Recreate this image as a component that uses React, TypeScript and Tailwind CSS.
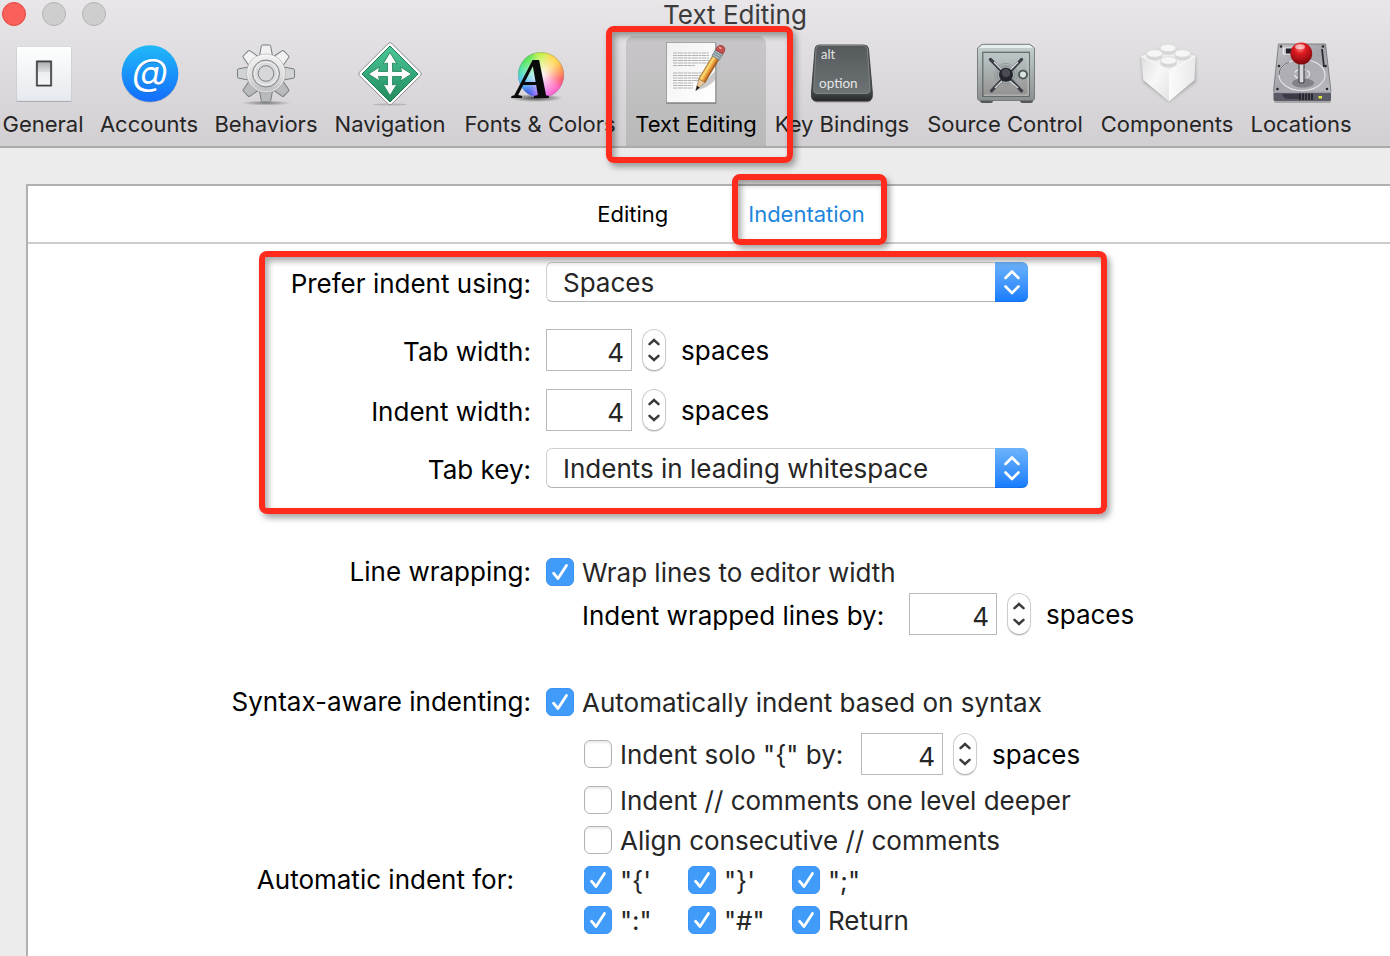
import { useState, type ReactNode } from "react";

/* ---------- toolbar icons ---------- */

function GeneralIcon() {
  return (
    <svg width="64" height="64" viewBox="0 0 64 64" aria-hidden="true">
      <defs>
        <linearGradient id="genPlate" x1="0" y1="0" x2="0" y2="1">
          <stop offset="0" stopColor="#fdfefe" />
          <stop offset="1" stopColor="#e6eaee" />
        </linearGradient>
        <linearGradient id="genSwitch" x1="0" y1="0" x2="0" y2="1">
          <stop offset="0" stopColor="#a9abad" />
          <stop offset="0.42" stopColor="#dcdedf" />
          <stop offset="0.46" stopColor="#eceef0" />
          <stop offset="1" stopColor="#f4f6f8" />
        </linearGradient>
      </defs>
      <rect x="5.5" y="5" width="55" height="55" rx="1" fill="#8e9093" opacity="0.75" />
      <rect x="5.5" y="4.5" width="55" height="54.5" rx="1" fill="url(#genPlate)" stroke="#c9ccd0" strokeWidth="0.6" />
      <rect x="24.5" y="18" width="17" height="27" rx="1.5" fill="#c3c6c9" />
      <rect x="26" y="19.5" width="14" height="24" fill="url(#genSwitch)" stroke="#3d3e40" strokeWidth="1.6" />
    </svg>
  );
}

function AccountsIcon() {
  return (
    <svg width="64" height="64" viewBox="0 0 64 64" aria-hidden="true">
      <defs>
        <linearGradient id="accBlue" x1="0" y1="0" x2="0" y2="1">
          <stop offset="0" stopColor="#20b9f8" />
          <stop offset="1" stopColor="#136dfd" />
        </linearGradient>
      </defs>
      <circle cx="33" cy="32.3" r="28.3" fill="#6f7f9a" opacity="0.5" />
      <circle cx="33" cy="31.5" r="28.3" fill="url(#accBlue)" />
      <g fontFamily="Inter, sans-serif" fontSize="37" fontStyle="italic" textAnchor="middle">
        <text x="33" y="43.5" fill="#1d5fae" opacity="0.6">
          @
        </text>
        <text x="33" y="42.5" fill="#fff">
          @
        </text>
      </g>
    </svg>
  );
}

const gearTeeth = [0, 45, 90, 135, 180, 225, 270, 315];

function BehaviorsIcon() {
  return (
    <svg width="64" height="64" viewBox="0 0 64 64" aria-hidden="true">
      <defs>
        <linearGradient id="gearBody" gradientUnits="userSpaceOnUse" x1="0" y1="2" x2="0" y2="60">
          <stop offset="0" stopColor="#fbfbfb" />
          <stop offset="0.55" stopColor="#dededf" />
          <stop offset="1" stopColor="#a9aaac" />
        </linearGradient>
        <radialGradient id="gearShadow">
          <stop offset="0" stopColor="#555" stopOpacity="0.7" />
          <stop offset="1" stopColor="#555" stopOpacity="0" />
        </radialGradient>
      </defs>
      <ellipse cx="32" cy="61" rx="25" ry="2.5" fill="url(#gearShadow)" />
      <g stroke="#777b80" strokeWidth="1">
        {gearTeeth.map((a) => (
          <path
            key={a}
            d="M25.5 14L27.3 4.2Q27.5 3 28.6 3H35.4Q36.5 3 36.7 4.2L38.5 14Z"
            transform={`rotate(${a} 32 31.5)`}
            fill={a > 90 && a < 270 ? "#b9babc" : a === 90 || a === 270 ? "#d2d3d4" : "#f1f1f2"}
          />
        ))}
      </g>
      <circle cx="32" cy="31.5" r="19.5" fill="url(#gearBody)" stroke="#a4a6a9" strokeWidth="0.6" />
      <circle cx="32" cy="31.5" r="18.3" fill="none" stroke="#fff" strokeWidth="0.8" opacity="0.6" />
      <circle cx="32" cy="31.5" r="13.5" fill="#d9dadc" stroke="#7d8186" strokeWidth="1" />
      <circle cx="32" cy="31.5" r="11.5" fill="none" stroke="#f0f0f0" strokeWidth="1" />
      <circle cx="32" cy="31.5" r="7.8" fill="#d7d6d9" stroke="#7d8186" strokeWidth="1" />
    </svg>
  );
}

function NavigationIcon() {
  return (
    <svg width="64" height="64" viewBox="0 0 64 64" aria-hidden="true">
      <defs>
        <linearGradient id="navGreen" gradientUnits="userSpaceOnUse" x1="0" y1="4" x2="0" y2="60">
          <stop offset="0" stopColor="#4fc798" />
          <stop offset="0.5" stopColor="#35a97c" />
          <stop offset="1" stopColor="#238a5c" />
        </linearGradient>
      </defs>
      <ellipse cx="32" cy="62.5" rx="17" ry="1" fill="#888" opacity="0.4" />
      <path
        d="M30.2 1.5Q32 -0.3 33.8 1.5L62.5 30.2Q64 32 62.5 33.8L33.8 62Q32 63.8 30.2 62L1.5 33.8Q0 32 1.5 30.2Z"
        fill="#fff"
        stroke="#8d8f91"
        strokeWidth="1"
      />
      <path d="M32 4L60 32L32 60L4 32Z" fill="url(#navGreen)" stroke="#1d7d55" strokeWidth="1" />
      <path
        d="M32 10.5L39 22L34.5 21V29.5H43.5L42.5 25L53.5 32L42.5 39L43.5 34.5H34.5V43L39 42L32 53.5L25 42L29.5 43V34.5H20.5L21.5 39L10.5 32L21.5 25L20.5 29.5H29.5V21L25 22Z"
        fill="#fff"
        stroke="#1f7f58"
        strokeWidth="0.8"
      />
    </svg>
  );
}

function FontsIcon() {
  return (
    <svg width="64" height="64" viewBox="0 0 64 64" className="overflow-visible" aria-hidden="true">
      <defs>
        <radialGradient id="wheelWhite">
          <stop offset="0" stopColor="#fff" stopOpacity="0.95" />
          <stop offset="1" stopColor="#fff" stopOpacity="0" />
        </radialGradient>
        <radialGradient id="fontShadow">
          <stop offset="0" stopColor="#222" stopOpacity="0.8" />
          <stop offset="1" stopColor="#222" stopOpacity="0" />
        </radialGradient>
        <clipPath id="wheelClip">
          <circle cx="33" cy="33" r="23" />
        </clipPath>
        <filter id="wheelBlur">
          <feGaussianBlur stdDeviation="3" />
        </filter>
      </defs>
      <ellipse cx="28" cy="56" rx="27" ry="4" fill="url(#fontShadow)" />
      <g clipPath="url(#wheelClip)">
        <rect x="8" y="8" width="50" height="50" fill="#b8a0ff" />
        <g filter="url(#wheelBlur)">
          <path d="M33 33L20 0H46Z" fill="#c4f048" />
          <path d="M33 33L44 0H70V14Z" fill="#ffd84e" />
          <path d="M33 33L70 12V34Z" fill="#ff9a4a" />
          <path d="M33 33L70 32V56Z" fill="#ff5560" />
          <path d="M33 33L68 52L44 70Z" fill="#ff62c8" />
          <path d="M33 33L46 70H22Z" fill="#d670ff" />
          <path d="M33 33L24 70L0 54Z" fill="#3f62ee" />
          <path d="M33 33L0 56V30Z" fill="#4dc4f5" />
          <path d="M33 33L0 34V10Z" fill="#48e3a0" />
          <path d="M33 33L-4 14L22 0Z" fill="#55e554" />
        </g>
        <circle cx="33" cy="33" r="22" fill="url(#wheelWhite)" />
      </g>
      <circle cx="33" cy="33" r="22.5" fill="none" stroke="#888" strokeOpacity="0.35" />
      <text x="6" y="56" fontFamily="'Liberation Serif', serif" fontStyle="italic" fontWeight="700" fontSize="56" fill="#0a0a0a">
        A
      </text>
    </svg>
  );
}

const docLines = [11, 13.5, 16, 18.5, 21, 23.5, 31, 33.5, 36, 38.5, 41, 43.5, 46];

function TextEditingIcon() {
  return (
    <svg width="64" height="64" viewBox="0 0 64 64" aria-hidden="true">
      <defs>
        <linearGradient id="paper" x1="0" y1="0" x2="1" y2="1">
          <stop offset="0" stopColor="#f1f1f1" />
          <stop offset="1" stopColor="#ffffff" />
        </linearGradient>
        <linearGradient id="pencil" x1="0" y1="0" x2="1" y2="0">
          <stop offset="0" stopColor="#c98a2a" />
          <stop offset="0.25" stopColor="#ffe27a" />
          <stop offset="0.5" stopColor="#f2b04a" />
          <stop offset="0.75" stopColor="#d9812c" />
          <stop offset="1" stopColor="#8a4a17" />
        </linearGradient>
      </defs>
      <rect x="2" y="1" width="50.5" height="61" fill="#77787a" opacity="0.7" />
      <rect x="2.5" y="0.5" width="49" height="60" fill="url(#paper)" stroke="#9a9a9b" strokeWidth="0.8" />
      {docLines.map((y, i) => (
        <path
          key={y}
          d={`M9 ${y}H${i === 5 ? 31 : i > 9 ? 29 : i > 6 ? 38 : 45}`}
          stroke="#b2b2b3"
          strokeWidth="1"
          strokeDasharray="4 0.5 6 0.5 3 0.5"
        />
      ))}
      <path d="M33 48L51 29V38Q44 46 33 48Z" fill="#555" opacity="0.3" />
      <g transform="translate(32 48.5) rotate(31)">
        <path d="M-0.3 0L-3.7 -12H3.7Z" fill="#e9c79a" stroke="#8f6a3c" strokeWidth="0.5" />
        <path d="M0 0.5L-1.6 -4.5H1.6Z" fill="#171717" />
        <rect x="-3.7" y="-39" width="7.4" height="27.5" fill="url(#pencil)" stroke="#8a5a1e" strokeWidth="0.5" />
        <rect x="-4.2" y="-45" width="8.4" height="7" fill="#aab8bd" stroke="#66767b" strokeWidth="0.7" />
        <path d="M-4 -42.8H4M-4 -40.5H4" stroke="#6d7f86" strokeWidth="0.8" />
        <path d="M-4.2 -45V-48Q-4 -52 0 -52Q4 -52 4.2 -48V-45Z" fill="#c4504f" stroke="#8c3030" strokeWidth="0.6" />
        <ellipse cx="-1.2" cy="-49" rx="1.8" ry="1" fill="#eb9a98" />
      </g>
    </svg>
  );
}

function KeyIcon() {
  return (
    <svg width="64" height="64" viewBox="0 0 64 64" aria-hidden="true">
      <defs>
        <linearGradient id="keyTop" x1="0" y1="0" x2="0" y2="1">
          <stop offset="0" stopColor="#55595b" />
          <stop offset="1" stopColor="#6d7375" />
        </linearGradient>
        <linearGradient id="keySide" x1="0" y1="0" x2="0" y2="1">
          <stop offset="0" stopColor="#5d6163" />
          <stop offset="0.85" stopColor="#46494b" />
          <stop offset="1" stopColor="#242628" />
        </linearGradient>
      </defs>
      <rect x="3" y="52" width="58" height="8.5" rx="4" fill="#777" opacity="0.6" />
      <path
        d="M9 3H54Q58 3 58.5 7L62.3 50V54Q62.3 59 57 59H7Q1.5 59 1.5 54V50L5 7Q5.5 3 9 3Z"
        fill="url(#keySide)"
        stroke="#2d2f31"
        strokeWidth="0.8"
      />
      <path
        d="M9.5 3.5H53.5Q57 3.5 57.3 7L60 47Q60.2 51.5 56 51.5H7.5Q3.5 51.5 3.8 47L6 7Q6.2 3.5 9.5 3.5Z"
        fill="url(#keyTop)"
        stroke="#878c8e"
        strokeWidth="0.8"
      />
      <text x="11" y="17" fontFamily="Lato, sans-serif" fontSize="13" fill="#e4e6e6">
        alt
      </text>
      <text x="9" y="46" fontFamily="Lato, sans-serif" fontSize="13.5" fill="#e4e6e6">
        option
      </text>
    </svg>
  );
}

function SafeIcon() {
  return (
    <svg width="64" height="64" viewBox="0 0 64 64" aria-hidden="true">
      <defs>
        <linearGradient id="safeBody" x1="0" y1="0" x2="0" y2="1">
          <stop offset="0" stopColor="#c6d1d1" />
          <stop offset="1" stopColor="#8c8f8f" />
        </linearGradient>
        <linearGradient id="safeDoor" x1="0" y1="0" x2="0" y2="1">
          <stop offset="0" stopColor="#bcc9c9" />
          <stop offset="1" stopColor="#93908f" />
        </linearGradient>
      </defs>
      <rect x="7" y="56" width="13" height="5" rx="2.5" fill="#55585a" />
      <rect x="47" y="56" width="13" height="5" rx="2.5" fill="#55585a" />
      <path
        d="M9 2.3H57L61.5 6V56Q61.5 58.5 59 58.5H7Q4.5 58.5 4.5 56V6Z"
        fill="url(#safeBody)"
        stroke="#6f7676"
        strokeWidth="0.9"
      />
      <path d="M9.5 3H56.5L60 6H6Z" fill="#e6eeee" />
      <rect x="9.8" y="10.3" width="46.5" height="44" fill="url(#safeDoor)" stroke="#5e6566" strokeWidth="1.2" />
      <path d="M11 53.2H55.2V11.5" fill="none" stroke="#d9e1e1" strokeWidth="0.7" />
      <circle cx="33" cy="32.7" r="11.3" fill="none" stroke="#8d9597" strokeWidth="0.8" />
      <circle cx="33" cy="32.7" r="9" fill="#a0aaab" stroke="#7e8688" strokeWidth="0.8" />
      <path d="M17.5 17.5L48.5 48.8M48.5 17.5L18.5 48.8" stroke="#3b3e45" strokeWidth="3.2" strokeLinecap="round" />
      <path d="M21 20L29 28M45 20L37 28M22 46L29 39M45 46L37 39" stroke="#dfe5e8" strokeWidth="1.3" />
      <circle cx="33" cy="32.7" r="7" fill="#25262d" />
      <circle cx="33" cy="31" r="4.2" fill="#4a4b54" />
      <circle cx="50" cy="32.6" r="4" fill="#d9e2e2" stroke="#4f5556" strokeWidth="1.9" />
    </svg>
  );
}

const studs = [
  [33, 8],
  [19.5, 13.5],
  [47.5, 13.5],
  [33.5, 20.5],
];

function BrickIcon() {
  return (
    <svg width="64" height="64" viewBox="0 0 64 64" aria-hidden="true">
      <defs>
        <linearGradient id="brickLeft" x1="0" y1="0" x2="1" y2="1">
          <stop offset="0" stopColor="#dededf" />
          <stop offset="0.5" stopColor="#f7f7f7" />
          <stop offset="1" stopColor="#e4e4e4" />
        </linearGradient>
        <linearGradient id="brickRight" x1="0" y1="0" x2="1" y2="0">
          <stop offset="0" stopColor="#fbfbfb" />
          <stop offset="1" stopColor="#e9e9ea" />
        </linearGradient>
        <filter id="brickShadow" x="-20%" y="-20%" width="140%" height="140%">
          <feGaussianBlur stdDeviation="1.5" />
        </filter>
      </defs>
      <path d="M6 15L33 5L61 15V40L34 60L8 40Z" fill="#8d8d90" opacity="0.6" filter="url(#brickShadow)" />
      <path d="M6 14L33 4.5L60.5 14L34 29Z" fill="#f0f0f1" />
      <path d="M6 14L34 29V59.5L8.3 38Z" fill="url(#brickLeft)" />
      <path d="M60.5 14L34 29V59.5L59.5 38Z" fill="url(#brickRight)" />
      <path d="M6 14L34 29L60.5 14" fill="none" stroke="#fff" strokeWidth="0.9" />
      {studs.map(([x, y]) => (
        <g key={`${x}-${y}`}>
          <path d={`M${x - 8} ${y - 2.5}V${y + 1}A8 4 0 0 0 ${x + 8} ${y + 1}V${y - 2.5}Z`} fill="#d6d6d8" />
          <ellipse cx={x} cy={y - 2} rx="8" ry="3.8" fill="#f6f6f6" stroke="#d4d4d6" strokeWidth="0.7" />
        </g>
      ))}
    </svg>
  );
}

const screws = [
  [12, 4.5],
  [54, 4.5],
  [10, 24],
  [56.5, 24],
  [8.5, 47],
  [58, 47],
];

function LocationsIcon() {
  return (
    <svg width="64" height="64" viewBox="0 0 64 64" aria-hidden="true">
      <defs>
        <linearGradient id="driveTop" x1="0" y1="0" x2="1" y2="1">
          <stop offset="0" stopColor="#c3c3c8" />
          <stop offset="0.5" stopColor="#a4a4aa" />
          <stop offset="1" stopColor="#b9b9be" />
        </linearGradient>
        <radialGradient id="ball" cx="0.45" cy="0.25" r="0.75">
          <stop offset="0" stopColor="#ff8b86" />
          <stop offset="0.35" stopColor="#e01c22" />
          <stop offset="1" stopColor="#7c060c" />
        </radialGradient>
      </defs>
      <rect x="5" y="57" width="57" height="4" rx="2" fill="#777" opacity="0.5" />
      <path d="M9.5 2H56.5L62 49.5H4.5Z" fill="url(#driveTop)" stroke="#6c6c72" strokeWidth="0.8" />
      <path d="M4.5 49.5H62V57.5Q62 59 60.5 59H6Q4.5 59 4.5 57.5Z" fill="#5a5b66" />
      <path d="M4.5 50H62" stroke="#e5e5ea" strokeWidth="1" />
      <path d="M13 52H31V57H20Q14 57 13 52Z" fill="#3a3b44" />
      {[31, 34, 37, 40, 43].map((x) => (
        <path key={x} d={`M${x} 51.5V58`} stroke="#1f2025" strokeWidth="1.7" />
      ))}
      <rect x="49.5" y="54" width="3.5" height="2.5" fill="#e2e83a" />
      <ellipse cx="33" cy="33" rx="23" ry="15.5" fill="#aeaeb4" stroke="#e6e6ea" strokeWidth="1.1" />
      <path d="M10 33A23 15.5 0 0 1 20 20" fill="none" stroke="#5f5f66" strokeWidth="1" />
      <ellipse cx="33" cy="32" rx="7.5" ry="5" fill="none" stroke="#ececf0" strokeWidth="1.1" strokeDasharray="5 2" />
      <ellipse cx="34" cy="41" rx="11" ry="4.5" fill="#55555b" opacity="0.5" />
      <path d="M53 7L55 25" stroke="#2b2b30" strokeWidth="1.8" />
      <path d="M14 6H24M13.5 12H22M14.5 6V12" stroke="#f0f0f3" strokeWidth="1.2" fill="none" />
      <rect x="17" y="6.5" width="8" height="5" fill="#222329" />
      {screws.map(([x, y]) => (
        <circle key={`${x}-${y}`} cx={x} cy={y} r="1.3" fill="#26262b" />
      ))}
      <rect x="30" y="19" width="5" height="22" rx="1.5" fill="#d7d7dc" stroke="#3d3d43" strokeWidth="1.1" />
      <circle cx="32.3" cy="11.5" r="10.9" fill="url(#ball)" />
      <ellipse cx="31" cy="4.8" rx="5" ry="2.5" fill="#fff" opacity="0.55" />
    </svg>
  );
}

/* ---------- shared controls ---------- */

/** Red marker frame laid over the thing it points out. */
function Marker({ place }: { place: string }) {
  return (
    <span
      aria-hidden="true"
      className={`pointer-events-none absolute z-10 rounded-lg border-6 border-[#ff2b1c] shadow-[3px_4px_6px_rgba(0,0,0,0.35),inset_3px_4px_6px_rgba(0,0,0,0.35)] ${place}`}
    />
  );
}

function CheckBox({ label, checked = false }: { label: string; checked?: boolean }) {
  return (
    <label className="flex h-7 items-center gap-2 leading-7 whitespace-nowrap text-[#262626]">
      <span className="relative size-7 shrink-0">
        <input
          type="checkbox"
          defaultChecked={checked}
          className="peer block size-7 appearance-none rounded-md border border-[#b4b4b4] bg-white shadow-[inset_0_2px_2px_rgba(0,0,0,0.08)] checked:border-[#3b92f2] checked:bg-[#419bf9] checked:shadow-none"
        />
        <svg
          className="pointer-events-none absolute inset-0 hidden peer-checked:block"
          width="28"
          height="28"
          viewBox="0 0 28 28"
          aria-hidden="true"
        >
          <path d="M7.5 15.2L12 20.5L20.5 7.5" fill="none" stroke="#fff" strokeWidth="2.8" strokeLinecap="round" strokeLinejoin="round" />
        </svg>
      </span>
      <span className="pt-0.5">{label}</span>
    </label>
  );
}

function PopUp({ id, options }: { id: string; options: string[] }) {
  return (
    <div className="relative h-10 w-[482px]">
      <select
        id={id}
        className="h-10 w-full appearance-none rounded-md border border-[#cfcfcf] border-b-[#b3b3b3] bg-white pt-0.5 pr-10 pl-4 leading-9 text-[#262626]"
      >
        {options.map((o) => (
          <option key={o}>{o}</option>
        ))}
      </select>
      <span className="pointer-events-none absolute top-0 right-0 flex h-10 w-[33px] items-center justify-center rounded-r-md border-b border-[#1a6fe8] bg-linear-to-b from-[#6cb3fa] to-[#157dfc]">
        <svg width="20" height="28" viewBox="0 0 20 28" aria-hidden="true">
          <path
            d="M3.5 10L10 3.5L16.5 10M3.5 18.5L10 25L16.5 18.5"
            fill="none"
            stroke="#fff"
            strokeWidth="2.6"
            strokeLinecap="round"
            strokeLinejoin="round"
          />
        </svg>
      </span>
    </div>
  );
}

function NumberField({ id, label, width }: { id: string; label?: string; width: string }) {
  const [value, setValue] = useState(4);
  return (
    <div className="flex h-[42px] items-center leading-7">
      <input
        id={id}
        aria-label={label}
        inputMode="numeric"
        value={value}
        onChange={(e) => setValue(Number(e.target.value) || 0)}
        className={`h-[42px] border border-[#b9b9b9] bg-white pt-1 pr-[7px] text-right text-[#262626] ${width}`}
      />
      <span className="ml-2.5 flex h-[42px] w-6 flex-col overflow-hidden rounded-xl border border-[#cdcdcd] border-b-[#b0b0b0] bg-white shadow-[0_1px_1px_rgba(0,0,0,0.12)]">
        <button
          type="button"
          aria-label="Increase"
          onClick={() => setValue(value + 1)}
          className="flex flex-1 items-end justify-center pb-1"
        >
          <svg width="14" height="8" viewBox="0 0 14 8" aria-hidden="true">
            <path d="M2.5 6.2L7 2L11.5 6.2" fill="none" stroke="#3c3c3c" strokeWidth="2.5" strokeLinecap="round" />
          </svg>
        </button>
        <button
          type="button"
          aria-label="Decrease"
          onClick={() => setValue(Math.max(0, value - 1))}
          className="flex flex-1 items-start justify-center pt-1"
        >
          <svg width="14" height="8" viewBox="0 0 14 8" aria-hidden="true">
            <path d="M2.5 1.8L7 6L11.5 1.8" fill="none" stroke="#3c3c3c" strokeWidth="2.5" strokeLinecap="round" />
          </svg>
        </button>
      </span>
      <span className="pt-0.5 pl-[15px]">spaces</span>
    </div>
  );
}

function Row({ label, htmlFor, children }: { label?: string; htmlFor?: string; children: ReactNode }) {
  return (
    <div className="grid grid-cols-[503px_1fr] items-center gap-x-[15px] leading-7 whitespace-nowrap">
      {htmlFor ? (
        <label htmlFor={htmlFor} className="pt-1 text-right">
          {label}
        </label>
      ) : (
        <span className="text-right">{label}</span>
      )}
      {children}
    </div>
  );
}

/* ---------- page ---------- */

const tools = [
  { name: "General", width: "w-[98px]", Icon: GeneralIcon },
  { name: "Accounts", width: "w-[114px]", Icon: AccountsIcon },
  { name: "Behaviors", width: "w-[120px]", Icon: BehaviorsIcon },
  { name: "Navigation", width: "w-[128px]", Icon: NavigationIcon },
  { name: "Fonts & Colors", width: "w-[172px]", Icon: FontsIcon },
  { name: "Text Editing", width: "w-[140px]", Icon: TextEditingIcon, active: true },
  { name: "Key Bindings", width: "w-[152px]", Icon: KeyIcon },
  { name: "Source Control", width: "w-[174px]", Icon: SafeIcon },
  { name: "Components", width: "w-[150px]", Icon: BrickIcon },
  { name: "Locations", width: "w-[118px]", Icon: LocationsIcon },
];

export default function App() {
  return (
    <div className="flex min-h-screen flex-col overflow-hidden bg-[#ececec] font-['Inter',sans-serif] text-[26px] text-black">
      <header className="border-b-2 border-[#acabac] bg-linear-to-b from-[#e8e6e8] to-[#d1cfd1]">
        <div className="flex h-9 items-start">
          <div className="flex shrink-0 gap-4 pt-0.5 pl-0.5">
            <button type="button" aria-label="Close" className="size-6 rounded-full border border-[#e2463f] bg-[#fc605b]" />
            <button type="button" aria-label="Minimize" className="size-6 rounded-full border border-[#b5b4b5] bg-[#cfcecf]" />
            <button type="button" aria-label="Zoom" className="size-6 rounded-full border border-[#b5b4b5] bg-[#cfcecf]" />
          </div>
          <h1 className="flex-1 pr-[26px] text-center leading-[30px] text-[#3c3b3c]">Text Editing</h1>
        </div>
        <nav className="-ml-1.5 flex h-[110px]">
          {tools.map(({ name, width, Icon, active }) => (
            <div key={name} className={`relative shrink-0 ${width}`}>
              <button
                type="button"
                aria-pressed={!!active}
                className={`flex size-full flex-col items-center pt-1.5 text-[22px] leading-9 whitespace-nowrap ${
                  active ? "rounded-t-lg bg-linear-to-b from-[#c8c6c8] to-[#bab9ba] text-black" : "text-[#262526]"
                }`}
              >
                <Icon />
                {name}
              </button>
              {active && <Marker place="-top-2.5 -right-[27px] -bottom-[17px] -left-5" />}
            </div>
          ))}
        </nav>
      </header>

      <main className="mt-9 ml-[26px] flex-1 border-t-2 border-l-2 border-[#b0b0b0] bg-white">
        <div className="flex h-[58px] items-stretch justify-center gap-20 border-b-2 border-[#cccccc] pl-11 text-[22px]">
          <button type="button">Editing</button>
          <div className="relative flex">
            <button type="button" className="text-[#1e86dc]">
              Indentation
            </button>
            <Marker place="-top-3 -right-[22px] -bottom-[3px] -left-4" />
          </div>
        </div>

        <form className="pb-[22px]">
          <fieldset className="relative pt-[18px]">
            <Row label="Prefer indent using:" htmlFor="prefer">
              <PopUp id="prefer" options={["Spaces", "Tabs"]} />
            </Row>
            <div className="mt-[27px] mb-[17px] flex flex-col gap-[18px]">
              <Row label="Tab width:" htmlFor="tab-width">
                <NumberField id="tab-width" width="w-[86px]" />
              </Row>
              <Row label="Indent width:" htmlFor="indent-width">
                <NumberField id="indent-width" width="w-[86px]" />
              </Row>
            </div>
            <Row label="Tab key:" htmlFor="tab-key">
              <PopUp id="tab-key" options={["Indents in leading whitespace", "Indents always", "Inserts tab character"]} />
            </Row>
            <Marker place="top-[7px] -bottom-[26px] left-[231px] w-[848px]" />
          </fieldset>

          <div className="mt-[70px]">
            <Row label="Line wrapping:">
              <CheckBox label="Wrap lines to editor width" checked />
            </Row>
          </div>
          <div className="mt-[7px] flex items-center pl-[554px] leading-7 whitespace-nowrap">
            <label htmlFor="wrap-indent" className="w-[327px] pt-1">
              Indent wrapped lines by:
            </label>
            <NumberField id="wrap-indent" width="w-[88px]" />
          </div>

          <div className="mt-[53px]">
            <Row label="Syntax-aware indenting:">
              <CheckBox label="Automatically indent based on syntax" checked />
            </Row>
          </div>
          <div className="mt-[17px] flex items-center pl-[556px]">
            <div className="w-[277px]">
              <CheckBox label={'Indent solo "{" by:'} />
            </div>
            <NumberField id="solo-indent" label="Solo brace indent" width="w-[82px]" />
          </div>
          <div className="mt-[11px] flex flex-col gap-3 pl-[556px]">
            <CheckBox label="Indent // comments one level deeper" />
            <CheckBox label="Align consecutive // comments" />
          </div>
          <div className="mt-3 flex whitespace-nowrap">
            <span className="w-[556px] pr-[70px] text-right leading-7">Automatic indent for:</span>
            <div className="grid grid-cols-[104px_104px_auto] gap-y-3">
              <CheckBox label={"\"{'"} checked />
              <CheckBox label={"\"}'"} checked />
              <CheckBox label={'";"'} checked />
              <CheckBox label={'":"'} checked />
              <CheckBox label={'"#"'} checked />
              <CheckBox label="Return" checked />
            </div>
          </div>
        </form>
      </main>
    </div>
  );
}
